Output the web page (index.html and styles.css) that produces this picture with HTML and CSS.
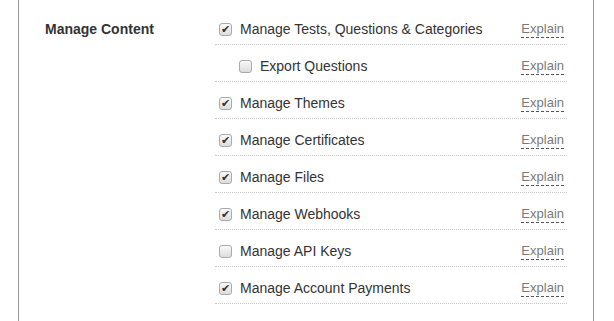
FILE: index.html
```html
<!DOCTYPE html>
<html lang="en">
<head>
    <meta charset="UTF-8">
    <meta name="viewport" content="width=device-width, initial-scale=1.0">
    <title>Permissions</title>
    <link rel="stylesheet" href="styles.css">
</head>
<body>
    <div class="panel">
        <div class="group">
            <div class="group-label">Manage Content</div>
            <ul class="perm-list">
                <li class="perm">
                    <label><input type="checkbox" checked> Manage Tests, Questions &amp; Categories</label>
                    <span class="explain">Explain</span>
                </li>
                <li class="perm sub">
                    <label><input type="checkbox"> Export Questions</label>
                    <span class="explain">Explain</span>
                </li>
                <li class="perm">
                    <label><input type="checkbox" checked> Manage Themes</label>
                    <span class="explain">Explain</span>
                </li>
                <li class="perm">
                    <label><input type="checkbox" checked> Manage Certificates</label>
                    <span class="explain">Explain</span>
                </li>
                <li class="perm">
                    <label><input type="checkbox" checked> Manage Files</label>
                    <span class="explain">Explain</span>
                </li>
                <li class="perm">
                    <label><input type="checkbox" checked> Manage Webhooks</label>
                    <span class="explain">Explain</span>
                </li>
                <li class="perm">
                    <label><input type="checkbox"> Manage API Keys</label>
                    <span class="explain">Explain</span>
                </li>
                <li class="perm">
                    <label><input type="checkbox" checked> Manage Account Payments</label>
                    <span class="explain">Explain</span>
                </li>
            </ul>
        </div>
    </div>
</body>
</html>
```

FILE: styles.css
```css
body, html {
    margin: 0;
    padding: 0;
    background-color: #fff;
    font-family: "Liberation Sans", Arial, sans-serif;
    font-size: 14px;
    color: #333;
}

.panel {
    margin-left: 18px;
    width: 576px;
    box-sizing: border-box;
    border-left: 1px solid #999;
    border-right: 1px solid #999;
    padding: 8px 26px 17px 26px;
}

/* one block of permissions */
.group {
    display: flex;
}

.group-label {
    width: 170px;
    flex-shrink: 0;
    font-weight: bold;
    padding-top: 11px;
    line-height: 20px;
}

.perm-list {
    flex: 1;
    list-style: none;
    margin: 0;
    padding: 0;
}

.perm {
    display: flex;
    align-items: center;
    justify-content: space-between;
    padding: 11px 3px 5px 4px;
    line-height: 20px;
    border-bottom: 1px dotted #c8c8c8;
}

.perm.sub {
    padding-left: 24px;
}

.perm label {
    display: flex;
    align-items: center;
    gap: 8px;
}

/* checkbox drawn by hand so it keeps the old grey look */
.perm input[type="checkbox"] {
    -webkit-appearance: none;
    appearance: none;
    width: 13px;
    height: 13px;
    margin: 0;
    border: 1px solid #aaa;
    border-radius: 3px;
    background: linear-gradient(#fafafa, #dcdcdc);
    box-sizing: border-box;
    position: relative;
}

.perm input[type="checkbox"]:checked::after {
    content: "\2714";
    position: absolute;
    left: 1px;
    top: -4px;
    font-size: 11px;
    line-height: 18px;
    color: #333;
}

.explain {
    color: #7a7a7a;
    font-size: 13px;
    line-height: 15px;
    padding-bottom: 1px;
    border-bottom: 1px dashed #555;
    cursor: help;
}
```
